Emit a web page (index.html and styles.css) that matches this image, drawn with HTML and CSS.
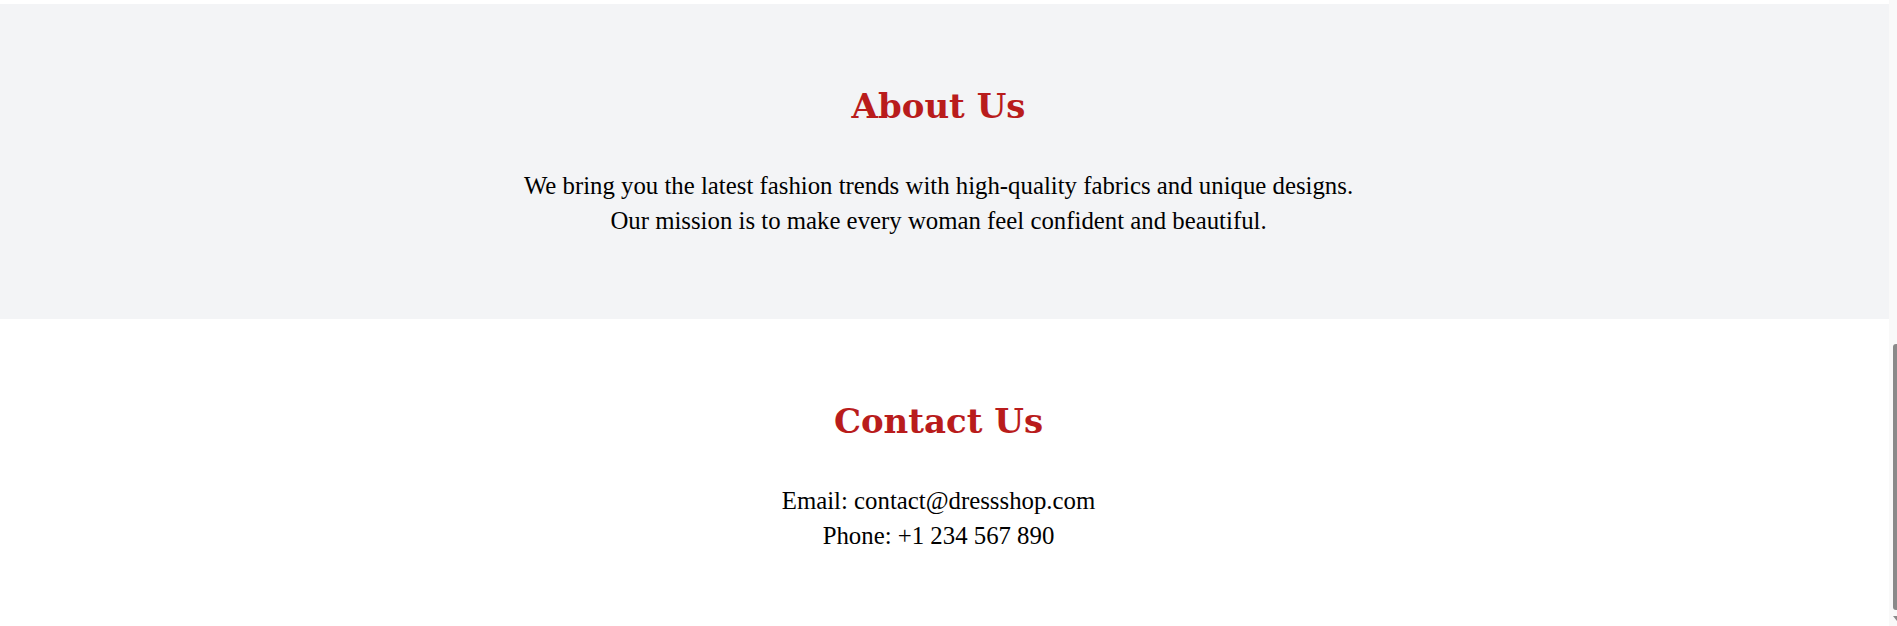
FILE: index.html
```html
<!DOCTYPE html>
<html lang="en">
<head>
<meta charset="utf-8">
<title>Dress Shop</title>
<link rel="stylesheet" href="styles.css">
</head>
<body>
<div class="frame">
  <main class="page">
    <div class="top-gap"></div>
    <section class="section about">
      <h2 class="title">About Us</h2>
      <p class="text">We bring you the latest fashion trends with high-quality fabrics and unique designs.<br>Our mission is to make every woman feel confident and beautiful.</p>
    </section>
    <section class="section contact">
      <h2 class="title">Contact Us</h2>
      <p class="text">Email: contact@dressshop.com<br>Phone: +1 234 567 890</p>
    </section>
  </main>
  <div class="scrollbar">
    <div class="thumb"></div>
    <div class="arrow"></div>
  </div>
</div>
</body>
</html>
```
FILE: styles.css
```css
html, body {
  margin: 0;
  padding: 0;
  height: 100%;
  overflow: hidden;
  background: #ffffff;
}

.frame {
  display: flex;
  height: 626px;
}

.page {
  flex: 1;
  display: flex;
  flex-direction: column;
  background: #ffffff;
}

.top-gap {
  height: 4px;
}

.section {
  text-align: center;
  padding-right: 12px;
}

.about {
  background: #f3f4f6;
  padding-top: 82px;
  padding-bottom: 81px;
}

.contact {
  background: #ffffff;
  padding-top: 82px;
}

.title {
  margin: 0 0 41px;
  font-family: "DejaVu Serif", Georgia, serif;
  font-weight: 700;
  font-size: 34px;
  line-height: 1.2;
  color: #b91c1c;
}

.text {
  margin: 0;
  font-family: "Liberation Serif", Georgia, serif;
  font-size: 24.8px;
  line-height: 35px;
  color: #000000;
}

.scrollbar {
  width: 8px;
  background: #f9f9f9;
  display: flex;
  flex-direction: column;
  align-items: flex-end;
}

.thumb {
  margin-top: 344px;
  width: 4px;
  height: 266px;
  background: #8a8a8a;
  border-radius: 3px 0 0 3px;
}

.arrow {
  margin-top: 6px;
  width: 0;
  height: 0;
  border-left: 4px solid transparent;
  border-top: 5px solid #8a8a8a;
}
```
